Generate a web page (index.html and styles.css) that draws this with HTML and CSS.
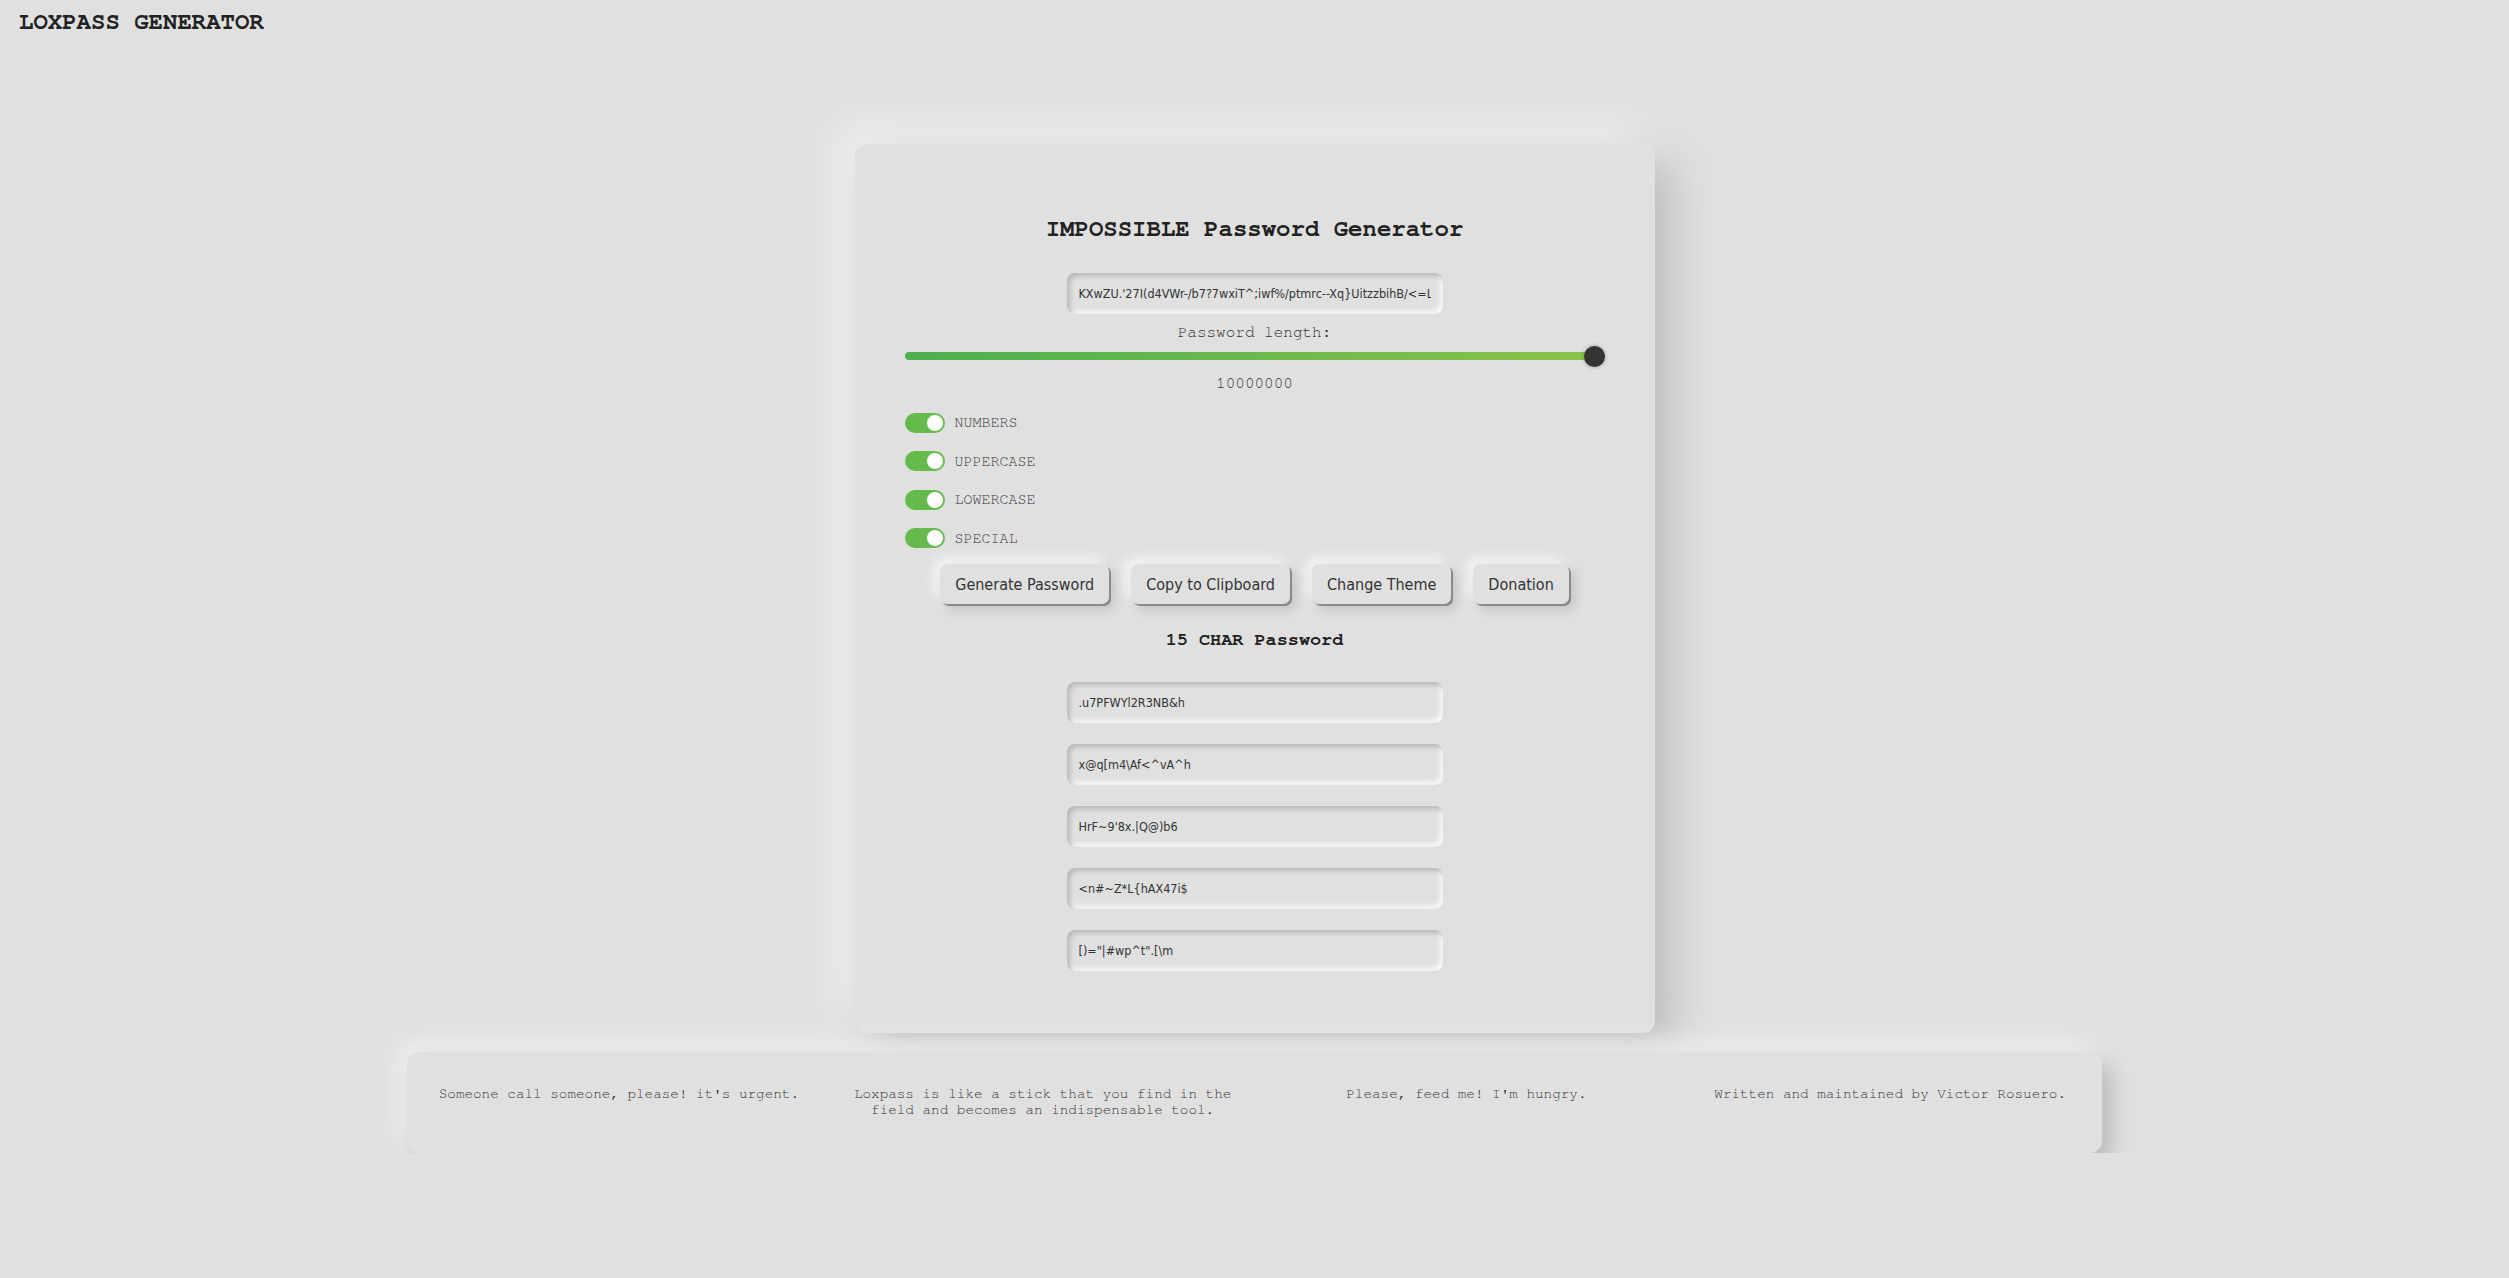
FILE: index.html
```html
<!DOCTYPE html>
<html lang="en">
<head>
    <meta charset="UTF-8">
    <meta name="viewport" content="width=device-width, initial-scale=1.0">
    <title>Loxpass Generator</title>
    <link rel="stylesheet" href="styles.css">
</head>
<body>
    <header class="topbar">LOXPASS GENERATOR</header>

    <main class="card">
        <h2 class="title">IMPOSSIBLE Password Generator</h2>
        <input class="field" type="text" value="KXwZU.'27I(d4VWr-/b7?7wxiT^;iwf%/ptmrc--Xq}UitzzbihB/<=L^\)G" readonly>
        <p class="len-label">Password length:</p>
        <input class="slider" type="range" min="1" max="100" value="100">
        <p class="len-value">10000000</p>

        <div class="options">
            <label class="opt"><span class="switch"><span class="knob"></span></span>NUMBERS</label>
            <label class="opt"><span class="switch"><span class="knob"></span></span>UPPERCASE</label>
            <label class="opt"><span class="switch"><span class="knob"></span></span>LOWERCASE</label>
            <label class="opt"><span class="switch"><span class="knob"></span></span>SPECIAL</label>
        </div>

        <div class="actions">
            <button class="btn">Generate Password</button>
            <button class="btn">Copy to Clipboard</button>
            <button class="btn">Change Theme</button>
            <button class="btn">Donation</button>
        </div>

        <h3 class="subtitle">15 CHAR Password</h3>
        <div class="list">
            <input class="field" type="text" value=".u7PFWYl2R3NB&amp;h" readonly>
            <input class="field" type="text" value="x@q[m4\Af&lt;^vA^h" readonly>
            <input class="field" type="text" value="HrF~9'8x.|Q@)b6" readonly>
            <input class="field" type="text" value="&lt;n#~Z*L{hAX47i$" readonly>
            <input class="field" type="text" value="[)=&quot;|#wp^t&quot;.[\m" readonly>
        </div>
    </main>

    <footer class="footer">
        <p>Someone call someone, please! it's urgent.</p>
        <p>Loxpass is like a stick that you find in the field and becomes an indispensable tool.</p>
        <p>Please, feed me! I'm hungry.</p>
        <p>Written and maintained by Victor Rosuero.</p>
    </footer>
</body>
</html>
```

FILE: styles.css
```css
*{
    box-sizing: border-box;
}
body{
    margin: 8px;
    background: #e0e0e0;
    color: #333;
    font-family: "Nimbus Mono PS", "FreeMono", "Courier New", "Liberation Mono", monospace;
}
.topbar{
    font-size: 24px;
    line-height: 28px;
    font-weight: bold;
    color: #222;
    padding-left: 11px;
}
.card{
    width: 800px;
    margin: 108px auto 0;
    padding: 71px 50px 62px;
    background: #e0e0e0;
    border-radius: 12px;
    box-shadow: 18px 18px 40px #bdbdbd, -18px -18px 40px #f0f0f0;
    display: flex;
    flex-direction: column;
    align-items: center;
}
.title{
    margin: 0;
    font-size: 24px;
    line-height: 28px;
    font-weight: bold;
    color: #222;
}
.field{
    display: block;
    width: 376px;
    height: 41px;
    border: none;
    outline: none;
    border-radius: 8px;
    padding: 0 12px;
    background: #e0e0e0;
    color: #333;
    font-family: "DejaVu Sans Condensed", "Liberation Sans Narrow", sans-serif;
    font-size: 12.5px;
    box-shadow: inset 3px 3px 5px #b8b8b8, inset -3px -3px 5px #fafafa;
}
.card > .field{
    margin-top: 30px;
}
.len-label{
    margin: 8px 0 0;
    font-size: 16px;
    line-height: 20px;
    color: #333;
}
.slider{
    -webkit-appearance: none;
    appearance: none;
    width: 700px;
    height: 8px;
    margin: 10px 0 0;
    border-radius: 4px;
    background: linear-gradient(to right, #4caf50, #8bc34a);
    outline: none;
}
.slider::-webkit-slider-thumb{
    -webkit-appearance: none;
    width: 21px;
    height: 21px;
    border-radius: 50%;
    background: #333;
    box-shadow: 0 0 4px rgba(0,0,0,0.3);
}
.len-value{
    margin: 13px 0 0;
    font-size: 16px;
    line-height: 20px;
    color: #333;
}
.options{
    align-self: stretch;
    display: flex;
    flex-direction: column;
    gap: 18.5px;
    margin-top: 19.5px;
}
.opt{
    display: flex;
    align-items: center;
    gap: 10px;
    height: 20px;
    font-size: 15px;
    color: #333;
}
.switch{
    display: flex;
    justify-content: flex-end;
    align-items: center;
    width: 40px;
    height: 20px;
    padding: 1px;
    border-radius: 10px;
    background: #64bb4c;
}
.knob{
    width: 18px;
    height: 18px;
    border-radius: 50%;
    background: #fff;
    border: 1px solid #64bb4c;
}
.actions{
    display: flex;
    gap: 22px;
    margin-top: 16px;
}
.btn{
    height: 40px;
    padding: 0 15px;
    border: none;
    border-radius: 7px;
    background: #e0e0e0;
    color: #333;
    font-family: "DejaVu Sans Condensed", "Liberation Sans Narrow", sans-serif;
    font-size: 16px;
    box-shadow: 2px 2px 0 #8a8a8a, 6px 6px 12px #c4c4c4, -6px -6px 12px #f4f4f4;
}
.subtitle{
    margin: 25px 0 0;
    font-size: 18.5px;
    line-height: 22px;
    font-weight: bold;
    color: #222;
}
.list{
    display: flex;
    flex-direction: column;
    gap: 21px;
    margin-top: 31px;
}
.footer{
    width: 1695px;
    height: 101px;
    margin: 19px auto 0;
    padding-top: 34px;
    display: grid;
    grid-template-columns: repeat(4, 1fr);
    align-items: start;
    border-radius: 12px;
    background: #e0e0e0;
    box-shadow: 10px 12px 20px #bcbcbc, -10px -10px 24px #eeeeee;
}
.footer p{
    margin: 0;
    padding: 0 20px;
    text-align: center;
    font-size: 14.3px;
    line-height: 16px;
    color: #333;
}
```
